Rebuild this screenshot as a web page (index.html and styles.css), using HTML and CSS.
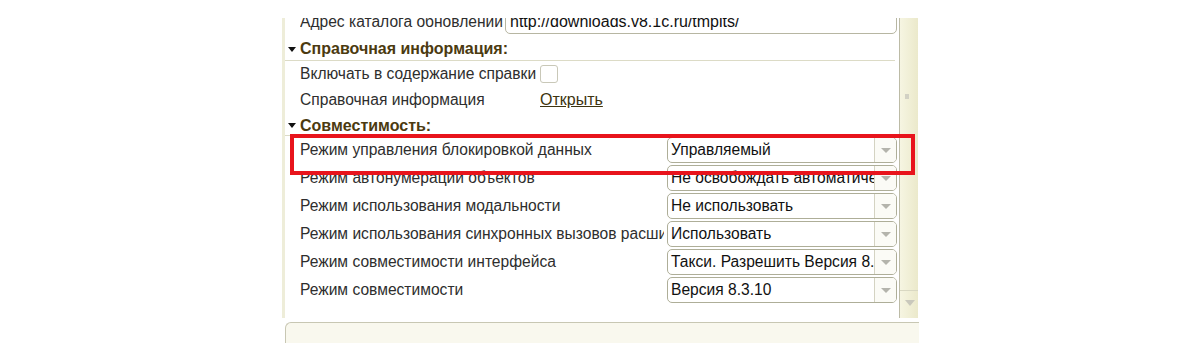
FILE: index.html
```html
<!DOCTYPE html>
<html>
<head>
  <meta charset="UTF-8">
  <title>Свойства конфигурации</title>
  <link rel="stylesheet" href="styles.css">
</head>
<body>
    <div class="window">
        <div class="form">
            <div class="row">
                <span class="label short">Адрес каталога обновлений</span>
                <div class="input">http://downloads.v8.1c.ru/tmplts/</div>
            </div>

            <div class="group first">
                <span class="arrow"></span>
                <span class="group-title">Справочная информация:</span>
            </div>
            <div class="row low">
                <span class="label mid">Включать в содержание справки</span>
                <span class="check"></span>
            </div>
            <div class="row">
                <span class="label mid">Справочная информация</span>
                <a class="link" href="#">Открыть</a>
            </div>

            <div class="group second">
                <span class="arrow"></span>
                <span class="group-title">Совместимость:</span>
            </div>
            <div class="row">
                <span class="label">Режим управления блокировкой данных</span>
                <div class="select"><span class="value">Управляемый</span><span class="btn"></span></div>
            </div>
            <div class="row">
                <span class="label">Режим автонумерации объектов</span>
                <div class="select"><span class="value">Не освобождать автоматически</span><span class="btn"></span></div>
            </div>
            <div class="row">
                <span class="label">Режим использования модальности</span>
                <div class="select"><span class="value">Не использовать</span><span class="btn"></span></div>
            </div>
            <div class="row">
                <span class="label">Режим использования синхронных вызовов расширений платформы и внешних компонент</span>
                <div class="select"><span class="value">Использовать</span><span class="btn"></span></div>
            </div>
            <div class="row">
                <span class="label">Режим совместимости интерфейса</span>
                <div class="select"><span class="value">Такси. Разрешить Версия 8.2</span><span class="btn"></span></div>
            </div>
            <div class="row">
                <span class="label">Режим совместимости</span>
                <div class="select"><span class="value">Версия 8.3.10</span><span class="btn"></span></div>
            </div>

            <div class="highlight"></div>
        </div>

        <div class="scrollbar">
            <div class="track"><span class="grip"></span></div>
            <div class="down"></div>
        </div>
    </div>
    <div class="footer"></div>
</body>
</html>
```

FILE: styles.css
```css
body {
    margin: 0;
    background-color: #ffffff;
    font-family: "Liberation Sans", Arial, sans-serif;
    font-size: 15.6px;
    color: #2e2e2e;
}

.window {
    display: flex;
    width: 633px;
    height: 300px;
    margin: 18px 0 0 282px;
    border-left: 3px solid #eeedd9;
    overflow: hidden;
}

.form {
    position: relative;
    flex: 1;
    margin-top: -10px;
    padding-right: 2px;
}

.row {
    display: flex;
    align-items: center;
    height: 28px;
    padding-left: 15px;
}

.row.low {
    height: 25px;
}

.label {
    width: 364px;
    flex-shrink: 0;
    white-space: nowrap;
    overflow: hidden;
}

.label.short {
    width: 205px;
}

.label.mid {
    width: 240px;
}

.input {
    flex: 1;
    height: 30px;
    margin-top: -6px;
    padding: 4px 0 0 4px;
    box-sizing: border-box;
    border: 1px solid #b7b6a2;
    border-radius: 0 0 5px 5px;
    color: #111;
    font-size: 16px;
    line-height: 26px;
}

.group {
    display: flex;
    align-items: center;
    height: 24px;
    padding-top: 2px;
    box-sizing: border-box;
    margin-right: 2px;
    border-bottom: 1px solid #dcdbc6;
}

.group.first {
    height: 25px;
}

.group.second {
    height: 22px;
}

.arrow {
    width: 0;
    height: 0;
    margin: 0 4px 0 3px;
    border-left: 4px solid transparent;
    border-right: 4px solid transparent;
    border-top: 5px solid #111;
}

.group-title {
    font-size: 16px;
    font-weight: bold;
    color: #4b3a10;
}

.check {
    width: 16px;
    height: 16px;
    border: 1px solid #c9c8b8;
    border-radius: 3px;
    background-color: #fff;
}

.link {
    color: #3d3410;
    font-size: 16px;
    text-decoration: underline;
}

.select {
    display: flex;
    width: 230px;
    height: 26px;
    margin-left: 3px;
    box-sizing: border-box;
    border: 1px solid #aeae98;
    border-radius: 5px;
    overflow: hidden;
}

.value {
    flex: 1;
    padding-left: 3px;
    white-space: nowrap;
    overflow: hidden;
    color: #111;
    font-size: 15.6px;
    line-height: 24px;
}

.btn {
    position: relative;
    width: 21px;
    flex-shrink: 0;
    border-left: 1px solid #d4d3c2;
    background-color: #fbfbf6;
}

.btn::after {
    content: "";
    position: absolute;
    left: 6px;
    top: 10px;
    border-left: 5px solid transparent;
    border-right: 5px solid transparent;
    border-top: 5px solid #b4b4ac;
}

.highlight {
    position: absolute;
    left: 5px;
    top: 126px;
    width: 617px;
    height: 33px;
    border: 4px solid #e8141c;
    box-sizing: content-box;
}

.scrollbar {
    display: flex;
    flex-direction: column;
    width: 20px;
    border-left: 1px solid #bcbba6;
    background: linear-gradient(to right, #f6f5e2, #ebe9cb);
}

.track {
    position: relative;
    flex: 1;
}

.grip {
    position: absolute;
    left: 5px;
    top: 76px;
    width: 4px;
    height: 5px;
    background-color: #d2d1c4;
}

.down {
    position: relative;
    height: 27px;
    border-top: 1px solid #d9d8c2;
}

.down::after {
    content: "";
    position: absolute;
    left: 5px;
    top: 9px;
    border-left: 5px solid transparent;
    border-right: 5px solid transparent;
    border-top: 6px solid #c9c8bc;
}

.footer {
    width: 633px;
    height: 30px;
    margin: 4px 0 0 285px;
    border: 1px solid #c8c7b3;
    border-right: none;
    border-bottom: none;
    border-radius: 6px 0 0 0;
    background-color: #f9f8ee;
}
```
